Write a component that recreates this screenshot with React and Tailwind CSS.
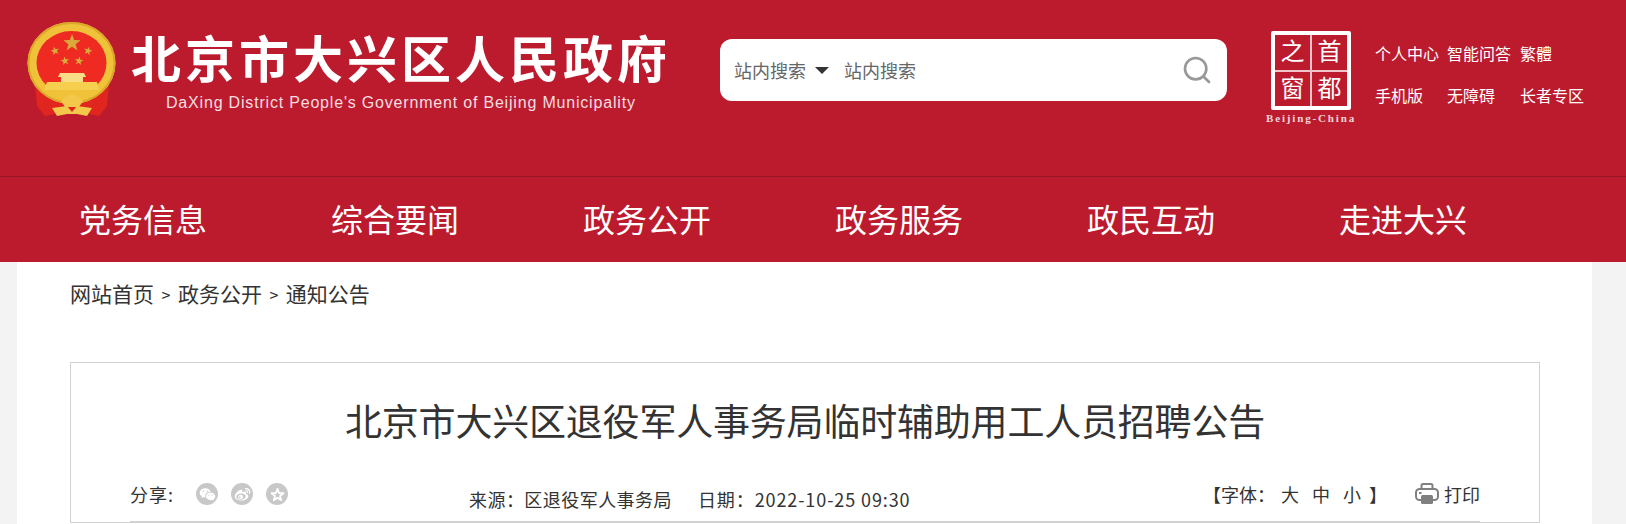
import { Search } from 'lucide-react';
import { RiWechatFill, RiWeiboFill } from 'react-icons/ri';

const NAV = ['党务信息', '综合要闻', '政务公开', '政务服务', '政民互动', '走进大兴'];
const LINKS = ['个人中心', '智能问答', '繁體', '手机版', '无障碍', '长者专区'];

function star(cx, cy, r, rot = 0) {
  const pts = [];
  for (let i = 0; i < 10; i++) {
    const rad = i % 2 === 0 ? r : r * 0.42;
    const a = (-90 + rot + i * 36) * (Math.PI / 180);
    pts.push(`${(cx + rad * Math.cos(a)).toFixed(2)},${(cy + rad * Math.sin(a)).toFixed(2)}`);
  }
  return pts.join(' ');
}

function Emblem() {
  return (
    <svg viewBox="0 0 90 96" className="w-[90px] h-[96px] shrink-0">
      <path d="M8 62 L10 84 L18 94 L36 90 L54 90 L72 94 L80 84 L82 62 L45 82 Z" fill="#e0261f" />
      <ellipse cx="44.500" cy="41" rx="44" ry="41" fill="#efc23a" />
      <ellipse cx="44.500" cy="41" rx="43" ry="40" fill="none" stroke="#dba729" strokeWidth="2" />
      <ellipse cx="44.500" cy="41" rx="35" ry="32" fill="#ee2a22" />
      <polygon points={star(45, 21, 9)} fill="#d9a93b" />
      <polygon points={star(28, 29, 4.5, -15)} fill="#d9a93b" />
      <polygon points={star(61, 29, 4.5, 15)} fill="#d9a93b" />
      <polygon points={star(38, 39, 4.5, -10)} fill="#d9a93b" />
      <polygon points={star(52, 39, 4.5, 10)} fill="#d9a93b" />
      <path d="M33 51 H57 L59 55 H56 V60 H34 V55 H31 Z" fill="#f9dd86" />
      <path d="M20 60 H70 L72 68 H17 Z" fill="#f6cf4e" />
      <path d="M14 68 H75 C69 74 60 77 52 78 L45 74 L38 78 C30 77 20 74 14 68 Z" fill="#efc23a" />
      <path d="M34 79 L38 75 L45 72 L52 75 L56 79 L52 85 H38 Z" fill="#f2c74a" />
      <path d="M25 86 L40 84 L45 90 L50 84 L65 86 L60 94 L50 92 H40 L30 94 Z" fill="#f2c74a" />
    </svg>
  );
}

function CapitalLogo() {
  return (
    <div className="flex flex-col items-center w-[90px] shrink-0">
      <div className="w-[80px] h-[79px] border-[4px] border-white rounded-[2px] grid grid-cols-2 grid-rows-2 gap-[2px] bg-[#f0c4c9] font-['Liberation_Serif','Noto_Sans_CJK_SC',serif] text-[24px] leading-none text-white">
        {['之', '首', '窗', '都'].map((ch) => (
          <div key={ch} className="bg-[#bc1b2e] flex items-center justify-center">{ch}</div>
        ))}
      </div>
      <div className="mt-[2px] font-['Liberation_Serif',serif] font-bold text-[11px] leading-[12px] tracking-[1.85px] text-[#f3d5d8] whitespace-nowrap">
        Beijing-China
      </div>
    </div>
  );
}

function PrinterIcon() {
  return (
    <svg viewBox="0 0 24 22" className="w-[24px] h-[22px] shrink-0">
      <path d="M6.5 6V2.5C6.5 1.7 7.2 1 8 1h8c.8 0 1.500.7 1.500 1.500V6" fill="none" stroke="#808080" strokeWidth="2" />
      <rect x="1" y="6" width="22" height="11" rx="3.500" fill="none" stroke="#808080" strokeWidth="2" />
      <rect x="6" y="12" width="12" height="9" rx="1.500" fill="#808080" />
      <rect x="4" y="9" width="2.500" height="2" fill="#808080" />
    </svg>
  );
}

function ShareDot({ children }) {
  return (
    <span className="w-[22px] h-[22px] rounded-full bg-[#c8c8c8] flex items-center justify-center text-white">
      {children}
    </span>
  );
}

export default function App() {
  return (
    <div className="h-[524px] overflow-hidden bg-[#f3f3f3] font-['Noto_Sans_CJK_SC','Noto_Sans',sans-serif]">
      {/* Header */}
      <header className="h-[177px] bg-[#bc1b2e] border-b border-[#951a26] flex items-start">
        <div className="ml-[27px] mt-[22px]">
          <Emblem />
        </div>
        <div className="ml-[14px] mt-[26px] w-[540px] shrink-0 flex flex-col">
          <div className="text-[50px] leading-[60px] font-bold tracking-[4px] text-white whitespace-nowrap">
            北京市大兴区人民政府
          </div>
          <div className="ml-[35px] mt-[8px] font-['Liberation_Sans',sans-serif] text-[16px] leading-[18px] tracking-[0.81px] text-[#f6dde0] whitespace-nowrap">
            DaXing District People's Government of Beijing Municipality
          </div>
        </div>

        {/* Search */}
        <div className="ml-[49px] mt-[39px] w-[507px] h-[62px] bg-white rounded-[12px] flex items-center pl-[14px] pr-[14px] text-[18px] text-[#666]">
          <span>站内搜索</span>
          <span className="ml-[9px] w-0 h-0 border-x-[7px] border-x-transparent border-t-[7px] border-t-[#333]"></span>
          <span className="ml-[15px]">站内搜索</span>
          <Search className="ml-auto w-[32px] h-[32px] text-[#999]" strokeWidth={2} />
        </div>

        <div className="ml-[39px] mt-[31px]">
          <CapitalLogo />
        </div>

        <div className="ml-[19px] mt-[42px] grid grid-cols-[72px_73px_auto] gap-y-[19px] text-[16px] leading-[23px] text-white whitespace-nowrap">
          {LINKS.map((l) => (
            <span key={l}>{l}</span>
          ))}
        </div>
      </header>

      {/* Nav */}
      <nav className="h-[85px] bg-[#bc1b2e] pl-[17px] pb-[3px] grid grid-cols-[repeat(6,252px)] items-center text-[32px] text-white text-center">
        {NAV.map((n) => (
          <span key={n}>{n}</span>
        ))}
      </nav>

      {/* Content */}
      <main className="ml-[17px] w-[1575px] bg-white pl-[53px] pb-[40px]">
        <div className="h-[64px] flex items-center text-[21px] text-[#333] whitespace-nowrap">
          <span>网站首页</span>
          <span className="mx-[7.5px] text-[16px]">&gt;</span>
          <span>政务公开</span>
          <span className="mx-[7.5px] text-[16px]">&gt;</span>
          <span>通知公告</span>
        </div>

        <div className="mt-[36px] w-[1470px] border border-[#d2d2d2] px-[59px] pt-[32px]">
          <h1 className="text-[37px] leading-[50px] tracking-[-0.2px] text-[#333] text-center whitespace-nowrap">
            北京市大兴区退役军人事务局临时辅助用工人员招聘公告
          </h1>

          <div className="mt-[36px] h-[41px] pb-[7px] border-b border-[#d2d2d2] flex items-start text-[18px] leading-[26px] text-[#333] whitespace-nowrap">
            <span className="tracking-[1px]">分享:</span>
            <div className="ml-[22px] pt-[2px] flex items-center gap-[13px]">
              <ShareDot><RiWechatFill className="w-[17px] h-[17px]" /></ShareDot>
              <ShareDot><RiWeiboFill className="w-[17px] h-[17px]" /></ShareDot>
              <ShareDot>
                <svg viewBox="0 0 24 24" className="w-[15px] h-[15px]">
                  <polygon points={star(12, 13, 10)} fill="none" stroke="white" strokeWidth="3" strokeLinejoin="round" />
                </svg>
              </ShareDot>
            </div>
            <span className="ml-[181px] mt-[5px] tracking-[0.45px]">来源：区退役军人事务局</span>
            <span className="ml-[26px] mt-[5px] tracking-[0.9px]">日期：2022-10-25 09:30</span>
            <div className="ml-auto flex items-center">
              <span>【字体：</span>
              <span className="ml-[6px]">大</span>
              <span className="ml-[13px]">中</span>
              <span className="ml-[13px]">小</span>
              <span className="ml-[8px]">】</span>
              <span className="ml-[28px]"><PrinterIcon /></span>
              <span className="ml-[5px]">打印</span>
            </div>
          </div>
        </div>
      </main>
    </div>
  );
}
